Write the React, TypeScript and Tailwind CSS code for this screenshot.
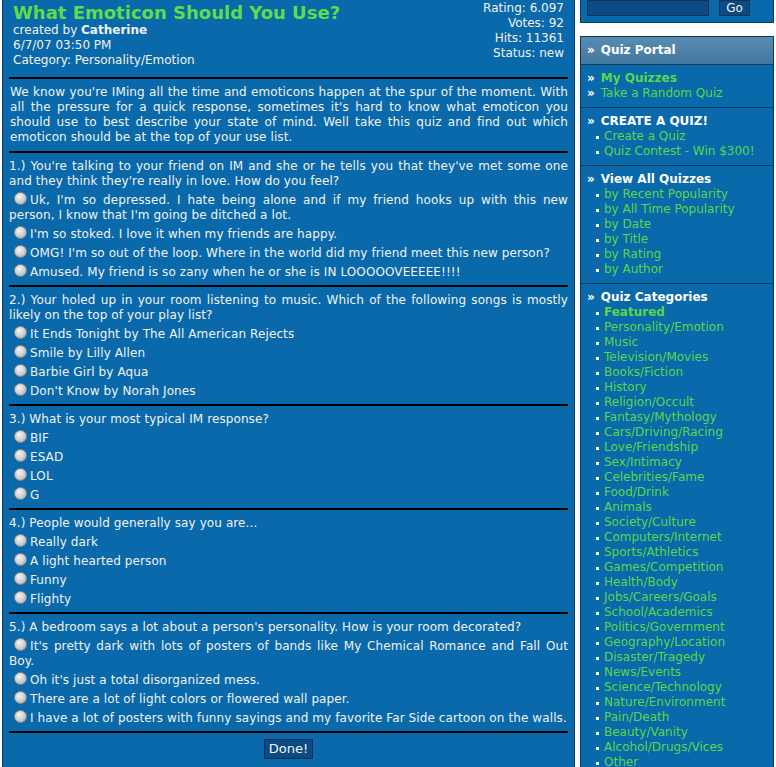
import React from 'react';

const questions: { q: string; answers: string[] }[] = [
  {
    q: "1.) You're talking to your friend on IM and she or he tells you that they've met some one and they think they're really in love. How do you feel?",
    answers: [
      "Uk, I'm so depressed. I hate being alone and if my friend hooks up with this new person, I know that I'm going be ditched a lot.",
      "I'm so stoked. I love it when my friends are happy.",
      'OMG! I\'m so out of the loop. Where in the world did my friend meet this new person?',
      'Amused. My friend is so zany when he or she is IN LOOOOOVEEEEE!!!!',
    ],
  },
  {
    q: '2.) Your holed up in your room listening to music. Which of the following songs is mostly likely on the top of your play list?',
    answers: [
      'It Ends Tonight by The All American Rejects',
      'Smile by Lilly Allen',
      'Barbie Girl by Aqua',
      "Don't Know by Norah Jones",
    ],
  },
  {
    q: '3.) What is your most typical IM response?',
    answers: ['BIF', 'ESAD', 'LOL', 'G'],
  },
  {
    q: '4.) People would generally say you are...',
    answers: ['Really dark', 'A light hearted person', 'Funny', 'Flighty'],
  },
  {
    q: "5.) A bedroom says a lot about a person's personality. How is your room decorated?",
    answers: [
      "It's pretty dark with lots of posters of bands like My Chemical Romance and Fall Out Boy.",
      "Oh it's just a total disorganized mess.",
      'There are a lot of light colors or flowered wall paper.',
      'I have a lot of posters with funny sayings and my favorite Far Side cartoon on the walls.',
    ],
  },
];

const categories = [
  'Personality/Emotion',
  'Music',
  'Television/Movies',
  'Books/Fiction',
  'History',
  'Religion/Occult',
  'Fantasy/Mythology',
  'Cars/Driving/Racing',
  'Love/Friendship',
  'Sex/Intimacy',
  'Celebrities/Fame',
  'Food/Drink',
  'Animals',
  'Society/Culture',
  'Computers/Internet',
  'Sports/Athletics',
  'Games/Competition',
  'Health/Body',
  'Jobs/Careers/Goals',
  'School/Academics',
  'Politics/Government',
  'Geography/Location',
  'Disaster/Tragedy',
  'News/Events',
  'Science/Technology',
  'Nature/Environment',
  'Pain/Death',
  'Beauty/Vanity',
  'Alcohol/Drugs/Vices',
  'Other',
];

const Radio = () => (
  <span className="inline-block w-[13px] h-[13px] rounded-full ml-[5px] mr-[3px] mt-[3px] align-[-1px] border border-[#8c8c8c] bg-[radial-gradient(circle_at_40%_35%,#f4f4f4,#cdcdcd_55%,#999999)]" />
);

const Bullet = ({ children, bold }: { children: React.ReactNode; bold?: boolean }) => (
  <div className="flex items-center pl-[9px]">
    <span className="w-[3px] h-[3px] bg-white mr-[5px] mt-[1px]" />
    <a className={`text-[#5dd64a] ${bold ? 'font-bold' : ''}`}>{children}</a>
  </div>
);

const Heading = ({ children }: { children: React.ReactNode }) => (
  <div className="font-bold text-white">
    <span className="mr-[6px]">»</span>
    {children}
  </div>
);

const Sidebar: React.FC = () => {
  return (
    <div className="w-[194px] ml-[5px] shrink-0">
      <div className="h-[23px] border-x border-b border-[#0c3a5c] bg-[#0969aa] flex items-start pl-[6px]">
        <div className="w-[122px] h-[16px] bg-[#0b4a82] border border-[#0c355a]" />
        <button className="ml-[10px] w-[31px] h-[16px] bg-[#0b4a82] border border-[#0c355a] text-[#f2f2f2] text-[12px] leading-[14px]">
          Go
        </button>
      </div>

      <div className="mt-[13px] border border-[#0c3a5c] bg-[#0969aa] text-[12px] leading-[15px]">
        <div className="h-[28px] flex items-center pl-[6px] bg-[linear-gradient(#5a8cb2,#42779f)] border-b border-[#0c3a5c] font-bold text-white">
          <span className="mr-[6px]">»</span>Quiz Portal
        </div>
        <div className="px-[6px] pt-[6px] pb-[6px]">
          <div className="font-bold">
            <span className="text-white mr-[6px]">»</span>
            <a className="text-[#5dd64a]">My Quizzes</a>
          </div>
          <div className="font-bold">
            <span className="text-white mr-[6px]">»</span>
            <a className="text-[#5dd64a] font-normal">Take a Random Quiz</a>
          </div>
        </div>
        <div className="px-[6px] pt-[6px] pb-[6px] border-t border-[#0c3a5c]">
          <Heading>CREATE A QUIZ!</Heading>
          <Bullet>Create a Quiz</Bullet>
          <Bullet>Quiz Contest - Win $300!</Bullet>
        </div>
        <div className="px-[6px] pt-[6px] pb-[6px] border-t border-[#0c3a5c]">
          <Heading>View All Quizzes</Heading>
          <Bullet>by Recent Popularity</Bullet>
          <Bullet>by All Time Popularity</Bullet>
          <Bullet>by Date</Bullet>
          <Bullet>by Title</Bullet>
          <Bullet>by Rating</Bullet>
          <Bullet>by Author</Bullet>
        </div>
        <div className="px-[6px] pt-[6px] pb-[6px] border-t border-[#0c3a5c]">
          <Heading>Quiz Categories</Heading>
          <Bullet bold>Featured</Bullet>
          {categories.map((c) => (
            <Bullet key={c}>{c}</Bullet>
          ))}
        </div>
      </div>
    </div>
  );
};

const App: React.FC = () => {
  return (
    <div className="bg-white min-h-screen font-['DejaVu_Sans',sans-serif] text-[12px] leading-[15px] text-[#f2f2f2] flex items-start pl-[2px]">
      <div className="w-[573px] shrink-0 bg-[#0969aa] border-x border-[#0c3a5c] px-[6px] pb-[8px]">
        <div className="flex justify-between pt-[2px] px-[4px]">
          <div>
            <h1 className="text-[#5fdc4b] font-bold text-[18px] leading-[21px]">What Emoticon Should You Use?</h1>
            <div>
              created by <b>Catherine</b>
            </div>
            <div>6/7/07 03:50 PM</div>
            <div>Category: Personality/Emotion</div>
          </div>
          <div className="text-right -mt-[1px]">
            <div>Rating: 6.097</div>
            <div>Votes: 92</div>
            <div>Hits: 11361</div>
            <div>Status: new</div>
          </div>
        </div>

        <div className="h-[2px] bg-black mt-[9px]" />
        <div className="tracking-[0.1px]">
          <p className="text-justify pt-[6px] pb-[6px] pl-[1px]">
            We know you're IMing all the time and emoticons happen at the spur of the moment. With all the pressure
            for a quick response, sometimes it's hard to know what emoticon you should use to best describe your
            state of mind. Well take this quiz and find out which emoticon should be at the top of your use list.
          </p>

          {questions.map((item) => (
            <div key={item.q}>
              <div className="h-[2px] bg-black" />
              <div className="pt-[6px] pb-[5px] text-justify">
                <div>{item.q}</div>
                {item.answers.map((a) => (
                  <div key={a}>
                    <Radio />
                    {a}
                  </div>
                ))}
              </div>
            </div>
          ))}
        </div>

        <div className="h-[2px] bg-black" />
        <div className="flex justify-center pt-[6px]">
          <button className="h-[20px] px-[4px] bg-[#0b4a82] border border-[#06305a] text-[#f2f2f2] text-[13px] leading-[18px]">
            Done!
          </button>
        </div>
      </div>
      <Sidebar />
    </div>
  );
};

export default App;
